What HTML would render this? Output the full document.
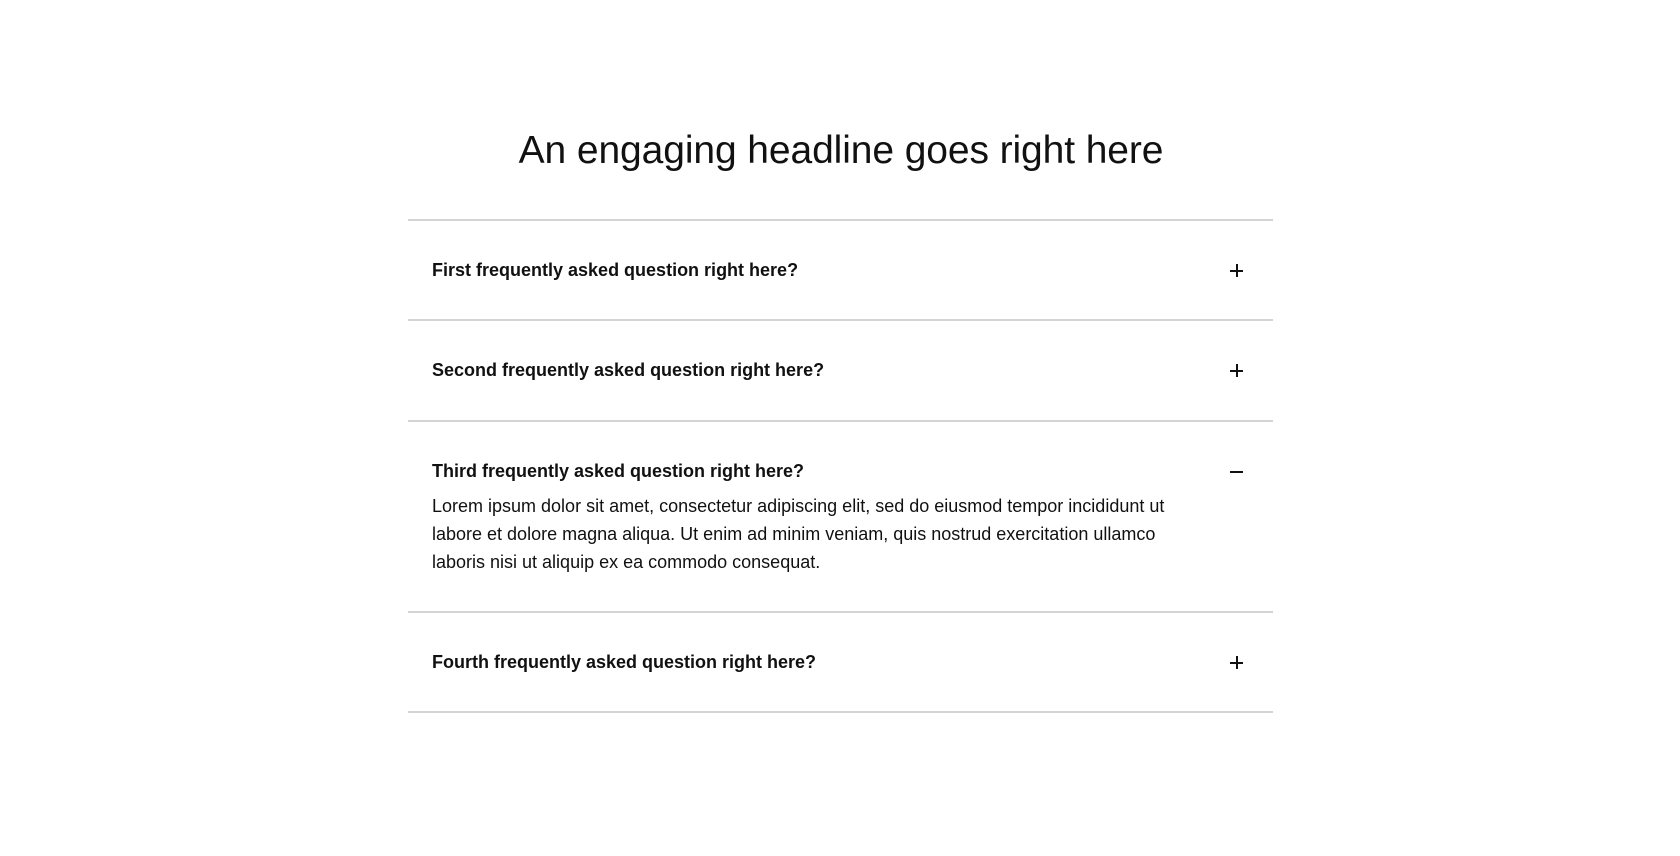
<!DOCTYPE html>
<html><head><meta charset="utf-8"><style>
body{margin:0;width:1680px;height:856px;background:#fff;font-family:"Liberation Sans",sans-serif;color:#111;position:relative;overflow:hidden}
h1{position:absolute;top:126px;left:0;width:1682px;text-align:center;margin:0;font-size:39px;font-weight:500;line-height:50px;letter-spacing:-0.1px}
.line{position:absolute;left:408px;width:865px;height:2px;background:#d4d4d4}
.q{position:absolute;left:432px;font-size:18px;font-weight:bold;line-height:24px;color:#111}
.ic{position:absolute;left:1230px;width:13px;height:13px}
.ic:before{content:"";position:absolute;left:0;top:5.5px;width:13px;height:2px;background:#111}
.ic.p:after{content:"";position:absolute;left:5.5px;top:0;width:2px;height:13px;background:#111}
.a{position:absolute;left:432px;top:492px;width:780px;font-size:18px;line-height:28px;color:#111}
</style></head><body>
<h1>An engaging headline goes right here</h1>
<div class="line" style="top:219px"></div>
<div class="q" style="top:258px">First frequently asked question right here?</div><div class="ic p" style="top:264px"></div>
<div class="line" style="top:319px"></div>
<div class="q" style="top:358px">Second frequently asked question right here?</div><div class="ic p" style="top:364px"></div>
<div class="line" style="top:420px"></div>
<div class="q" style="top:459px">Third frequently asked question right here?</div><div class="ic" style="top:465px"></div>
<div class="a">Lorem ipsum dolor sit amet, consectetur adipiscing elit, sed do eiusmod tempor incididunt ut labore et dolore magna aliqua. Ut enim ad minim veniam, quis nostrud exercitation ullamco laboris nisi ut aliquip ex ea commodo consequat.</div>
<div class="line" style="top:611px"></div>
<div class="q" style="top:650px">Fourth frequently asked question right here?</div><div class="ic p" style="top:656px"></div>
<div class="line" style="top:711px"></div>
</body></html>
